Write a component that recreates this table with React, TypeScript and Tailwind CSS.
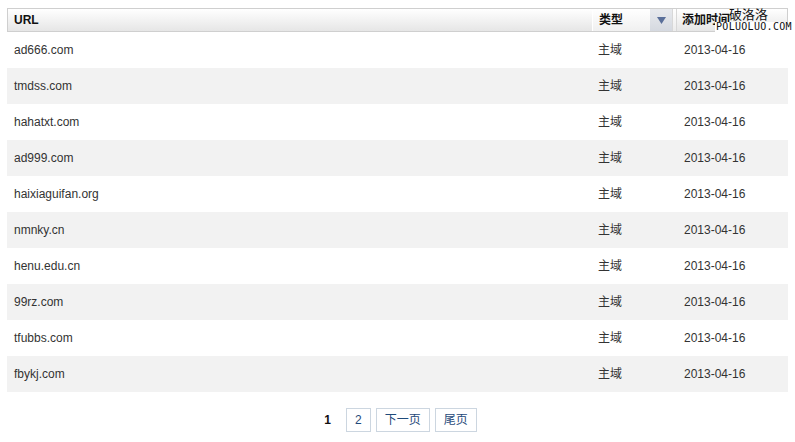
const rows = [
  "ad666.com",
  "tmdss.com",
  "hahatxt.com",
  "ad999.com",
  "haixiaguifan.org",
  "nmnky.cn",
  "henu.edu.cn",
  "99rz.com",
  "tfubbs.com",
  "fbykj.com",
];

export default function App() {
  return (
    <div className="relative w-[795px] h-[442px] bg-white text-[12px] text-[#333] font-['Liberation_Sans','Noto_Sans_CJK_SC',sans-serif]">
      <div className="pt-2 px-[7px]">
        {/* header */}
        <div className="flex h-6 border border-[#cfcfcf] bg-gradient-to-b from-white to-[#e6e6e6] font-bold text-[#111]">
          <div className="w-[584px] pl-[6px] flex items-center">URL</div>
          <div className="w-[58px] pl-[6px] flex items-center border-l border-white bg-gradient-to-b from-white to-[#f0f0f0]">类型</div>
          <div className="w-[22px] flex items-center justify-center bg-gradient-to-b from-[#e8eaee] to-[#d5d9e0]">
            <svg width="9" height="7" viewBox="0 0 9 7">
              <path d="M0 0h9L4.5 7z" fill="#5a6f9a" />
            </svg>
          </div>
          <div className="w-[5px] bg-gradient-to-b from-white to-[#ececec] border-x border-[#d8d8d8]" />
          <div className="flex-1 pl-[5px] flex items-center">添加时间</div>
        </div>
        {/* rows */}
        <div>
          {rows.map((r, i) => (
            <div key={r} className={`flex h-9 items-center ${i % 2 === 1 ? "bg-[#f2f2f2]" : "bg-white"}`}>
              <div className="w-[584px] pl-[7px]">{r}</div>
              <div className="w-[86px] pl-[7px]">主域</div>
              <div className="flex-1 pl-[7px]">2013-04-16</div>
            </div>
          ))}
        </div>
        {/* pagination */}
        <div className="flex justify-center items-center gap-[5px] mt-4">
          <span className="px-[6px] mr-[4px] font-bold text-[#111]">1</span>
          <span className="h-6 px-[8px] flex items-center border border-[#ccd6e0] text-[#1f4a7a]">2</span>
          <span className="h-6 px-[8px] flex items-center border border-[#ccd6e0] text-[#1f4a7a]">下一页</span>
          <span className="h-6 px-[8px] flex items-center border border-[#ccd6e0] text-[#1f4a7a]">尾页</span>
        </div>
      </div>
      {/* watermark */}
      <div className="absolute left-[729px] top-[8px] leading-none text-[#111]">
        <div className="text-[13px]">破洛洛</div>
        <div className="text-[10px] font-['DejaVu_Sans_Mono',monospace] -ml-[14px] mt-[1px] tracking-[0.3px] bg-white px-[1px]">POLUOLUO.COM</div>
      </div>
    </div>
  );
}
